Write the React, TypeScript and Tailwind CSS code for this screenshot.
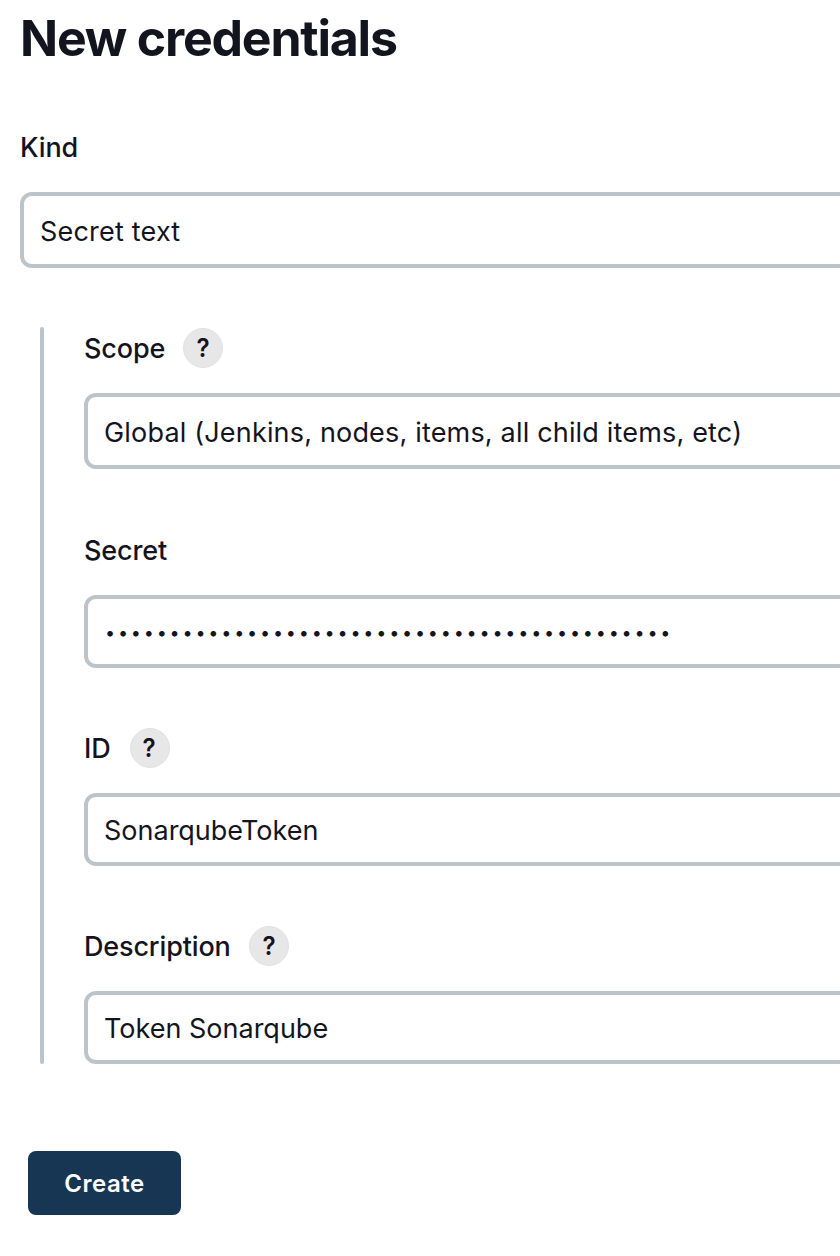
import React from "react";

function Help() {
  return (
    <span className="flex h-10 w-10 items-center justify-center rounded-full border border-[#e2e2e2] bg-[#e7e7e7] text-[26px] font-semibold leading-none">
      <span className="inline-block scale-x-[0.93] pb-px">?</span>
    </span>
  );
}

type FieldProps = {
  label: string;
  help?: boolean;
  labelGap: string;
  box: string;
  children: React.ReactNode;
};

function Field({ label, help, labelGap, box, children }: FieldProps) {
  return (
    <div>
      <div className={"flex h-10 items-center " + labelGap}>
        <span className="whitespace-nowrap pt-0.5 text-[27px] font-medium tracking-[-0.15px]">{label}</span>
        {help && <Help />}
      </div>
      <div className={"mt-[25px] flex w-[900px] items-center rounded-[12px] border-4 border-[#bcc4ca] bg-white pl-4 text-[27px] " + box}>
        {children}
      </div>
    </div>
  );
}

export default function App() {
  return (
    <main className="h-[1256px] w-full overflow-hidden bg-white pl-5 font-['Inter',sans-serif] text-[#14141f]">
      <h1 className="pt-[8px] text-[50px] font-bold leading-[60px] tracking-[-1.2px]">New credentials</h1>
      <div className="mt-[59px]">
        <Field label="Kind" labelGap="gap-0" box="h-[76px]">
          <span className="pt-[5px] tracking-[0.2px]">Secret text</span>
        </Field>
      </div>
      <section className="ml-5 mt-[59px] flex h-[737px]">
        <div className="h-full w-1 shrink-0 rounded-full bg-[#bcc4ca]" />
        <div className="ml-10 mt-px flex flex-col">
          <Field label="Scope" help labelGap="gap-[18px]" box="h-[76px]">
            <span className="whitespace-nowrap pt-[5px] tracking-[0.18px]">Global (Jenkins, nodes, items, all child items, etc)</span>
          </Field>
          <div className="mt-[61px]">
            <Field label="Secret" labelGap="gap-0" box="h-[73px]">
              <span className="whitespace-nowrap pl-px pt-[2px] text-[18px] tracking-[2.79px]">{"•".repeat(44)}</span>
            </Field>
          </div>
          <div className="mt-[60px]">
            <Field label="ID" help labelGap="gap-[19px]" box="h-[73px]">
              <span className="pt-[3px]">SonarqubeToken</span>
            </Field>
          </div>
          <div className="mt-[60px]">
            <Field label="Description" help labelGap="gap-[18px]" box="h-[73px]">
              <span className="pt-[3px]">Token Sonarqube</span>
            </Field>
          </div>
        </div>
      </section>
      <button className="ml-2 mt-[87px] flex h-16 w-[153px] items-center justify-center rounded-[8px] bg-[#173653] pt-0.5 text-[24px] font-semibold tracking-[0.5px] text-white">
        Create
      </button>
    </main>
  );
}
